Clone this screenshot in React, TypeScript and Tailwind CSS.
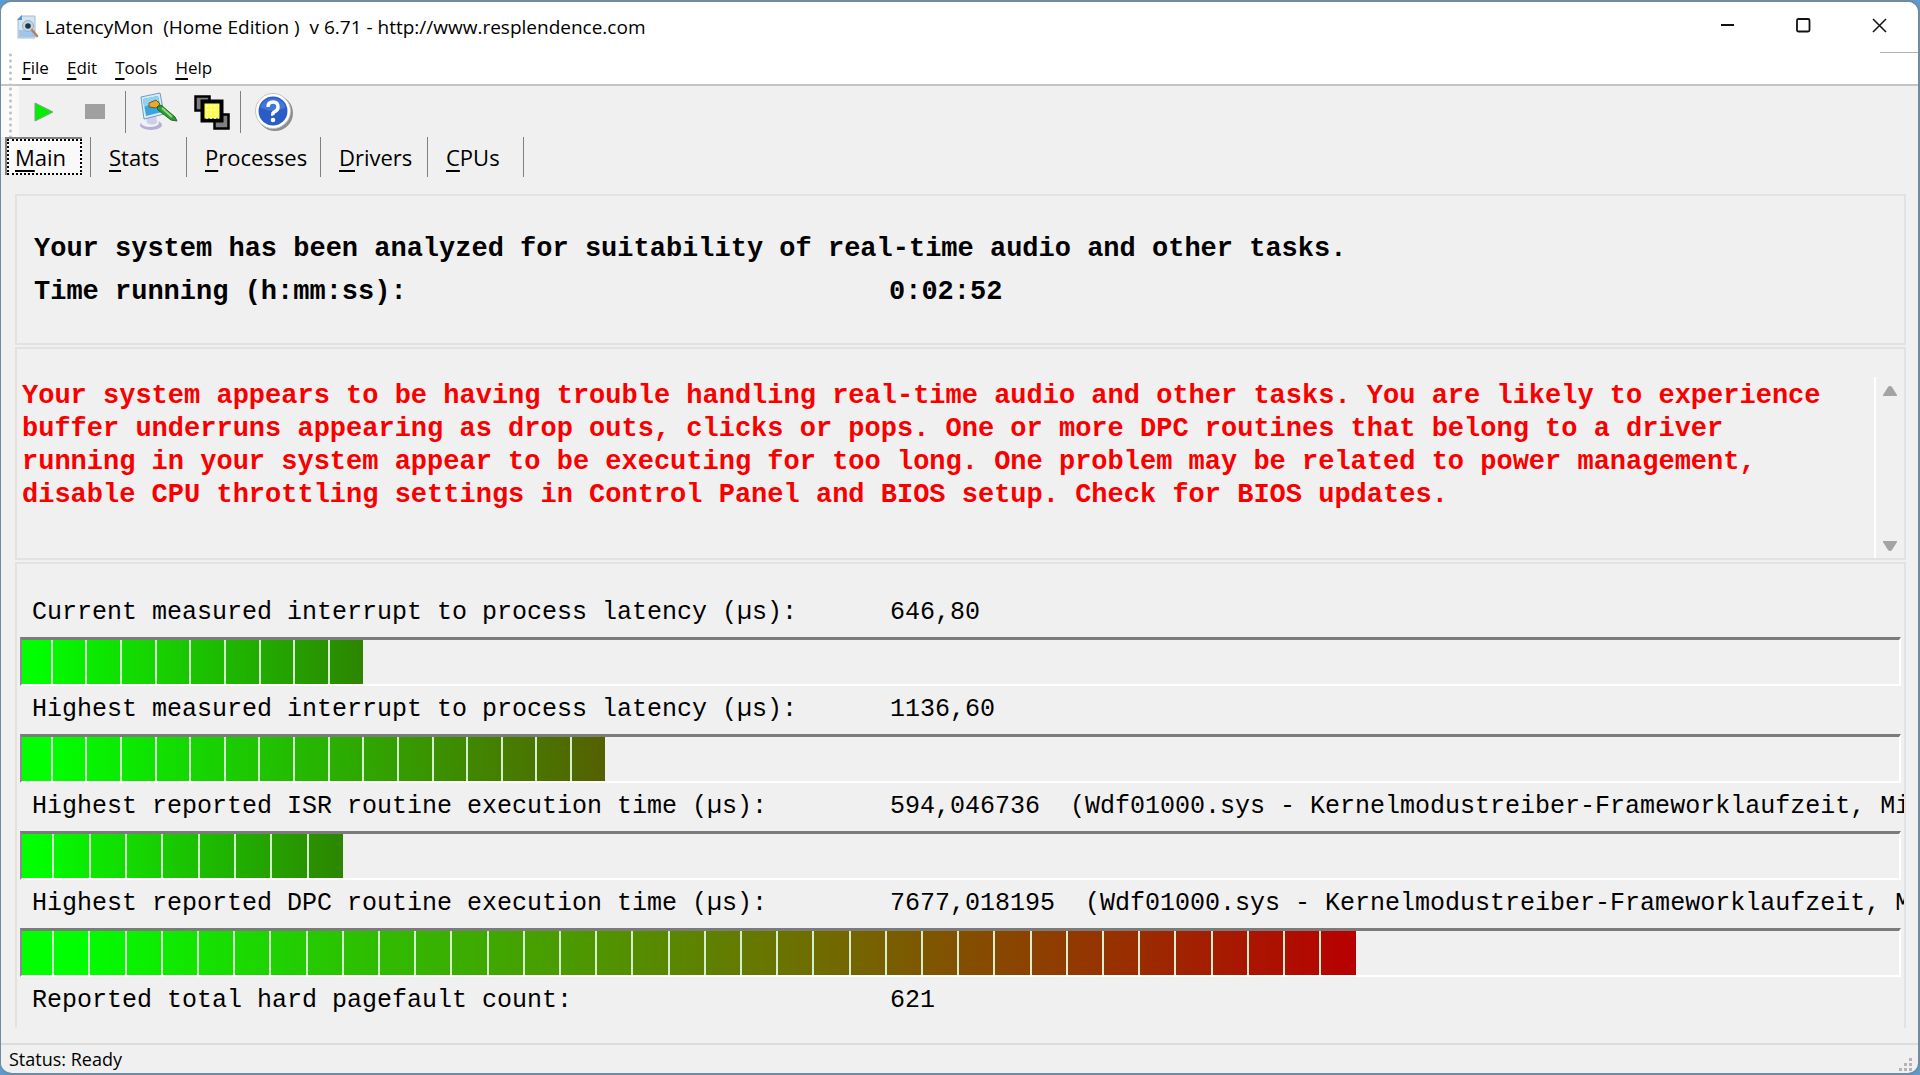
import { useState } from "react";

const TABS = [
  { name: "Main", width: "w-[86px]" },
  { name: "Stats", width: "w-24" },
  { name: "Processes", width: "w-[134px]" },
  { name: "Drivers", width: "w-[107px]" },
  { name: "CPUs", width: "w-24" },
];
const MENUS = ["File", "Edit", "Tools", "Help"];

const DRIVER = "(Wdf01000.sys - Kernelmodustreiber-Frameworklaufzeit, Microsoft Corporation)";

// fill = share of the track in percent, cells = number of blocks in the fill
const METERS = [
  {
    label: "Current measured interrupt to process latency (µs):",
    value: "646,80",
    fill: 18.15,
    cells: 10,
    gradient: "bg-[linear-gradient(90deg,#00ff00_4%,#14d800_35%,#2d8500)]",
  },
  {
    label: "Highest measured interrupt to process latency (µs):",
    value: "1136,60",
    fill: 31.05,
    cells: 17,
    gradient: "bg-[linear-gradient(90deg,#00ff00_5%,#2ea800_58%,#556000)]",
  },
  {
    label: "Highest reported ISR routine execution time (µs):",
    value: "594,046736  " + DRIVER,
    fill: 17.1,
    cells: 9,
    gradient: "bg-[linear-gradient(90deg,#00ff00_4%,#14d800_35%,#2d8500)]",
  },
  {
    label: "Highest reported DPC routine execution time (µs):",
    value: "7677,018195  " + DRIVER,
    fill: 71.05,
    cells: 37,
    gradient: "bg-[linear-gradient(90deg,#00ff00_4%,#2cc000_25%,#6e6e00_59%,#b80000)]",
  },
];

function Mnemonic({ text }: { text: string }) {
  return (
    <>
      <span className="underline decoration-2 underline-offset-4">{text[0]}</span>
      {text.slice(1)}
    </>
  );
}

function AppIcon() {
  return (
    <svg className="h-6 w-[22px]" viewBox="0 0 22 24" aria-hidden="true">
      <path d="M1 4 4 1h14v22H1z" fill="#d3e5f5" stroke="#a3bbd2" />
      <path d="M0 5 5 0v5z" fill="#5596d2" />
      <path d="M2 15h16v7H2z" fill="#9fc6ea" />
      <circle cx="11" cy="11" r="5.500" fill="#c4d6e0" stroke="#9aaebb" />
      <circle cx="11" cy="11" r="2.800" fill="#143844" />
      <path d="m15 15 5 6" stroke="#b9805f" strokeWidth="2.500" strokeLinecap="round" />
    </svg>
  );
}

function OptionsIcon() {
  return (
    <svg className="h-10 w-10" viewBox="0 0 40 40" aria-hidden="true">
      <ellipse cx="13" cy="33" rx="11" ry="5" fill="#b3b0d4" />
      <ellipse cx="12" cy="31" rx="9" ry="4" fill="#f0effa" />
      <path d="m8 24 10-1 1 8q-5 3-10 0z" fill="#cfcee8" />
      <path d="M3 5 22 1l4 21-20 5z" fill="#dcecf6" stroke="#6f9cb8" />
      <path d="M5 7 20 4l4 16-16 4z" fill="#38a3e8" />
      <path d="m5 7 15-3 1 5-15 6z" fill="#8fd2f6" />
      <path d="m11 11 7-3 4 4-4 4-7-1z" fill="#e8a92c" stroke="#7d5a12" />
      <path d="m19 15 4-2 14 12 2 4-6-1-13-10z" fill="#2f9a35" stroke="#1d6b25" />
      <path d="m24 16 10 9" stroke="#8fdc7a" strokeWidth="2" />
    </svg>
  );
}

function LayersIcon() {
  return (
    <svg className="h-9 w-9" viewBox="0 0 36 36" aria-hidden="true">
      <path d="M1.500 2.500h14v14h-14zM20.500 20.500h14v14h-14z" fill="#808080" stroke="#000" strokeWidth="2.500" />
      <path d="M8.500 7.500h19v19h-19z" fill="#ffff40" stroke="#000" strokeWidth="4" />
      <path d="M12 12h13M12 16h13M12 20h13M12 24h13" stroke="#fff" strokeWidth="1.500" strokeDasharray="2 2" />
    </svg>
  );
}

function HelpIcon() {
  return (
    <svg className="h-10 w-10" viewBox="0 0 40 40" aria-hidden="true">
      <circle cx="20" cy="21" r="18" fill="#8d8d8d" />
      <circle cx="18" cy="19" r="17.500" fill="#fff" stroke="#c4c4c4" />
      <circle cx="18" cy="19" r="14.500" fill="#2a5cc8" />
      <path d="M5 15a14 14 0 0 1 26 0q-13 8-26 0" fill="#4275d8" />
      <path d="M13 15q0-5 5-5t5 5q0 3-3 4.500t-2 4" fill="none" stroke="#fff" strokeWidth="3.500" />
      <circle cx="18" cy="28" r="2.300" fill="#fff" />
    </svg>
  );
}

function Gripper() {
  return (
    <div className="w-[3px] self-stretch bg-[radial-gradient(circle,#c2c2c2_1px,transparent_2px)] bg-size-[3px_6px]" />
  );
}

function Meter({ fill, cells, gradient }: { fill: number; cells: number; gradient: string }) {
  return (
    <div className="mx-[3px] h-[49px] border-t-3 border-r-2 border-b-2 border-l-2 border-t-[#7b7b7b] border-r-white border-b-white border-l-[#8c8c8c]">
      <div className={`flex h-full ${gradient}`} style={{ width: `${fill}%` }}>
        {Array.from({ length: cells }, (_, i) => (
          <div
            key={i}
            className="basis-0 border-r-2 border-[#d4efcf] last:border-r-0"
            style={{ flexGrow: i === 0 ? 0.88 : 1 }}
          />
        ))}
      </div>
    </div>
  );
}

export default function App() {
  const [tab, setTab] = useState("Main");

  return (
    <div className="h-screen bg-[#5b9bd0]">
      <div className="flex h-full flex-col overflow-hidden rounded-xl border-t-2 border-r-2 border-b-2 border-l border-[#6f8ba3] bg-[#f0f0f0] font-['Open_Sans',sans-serif] text-black">
        <header className="flex h-[50px] shrink-0 items-center justify-between bg-white pl-4">
          <div className="flex items-center gap-1.5">
            <AppIcon />
            <h1 className="text-[19px] whitespace-pre">
              {"LatencyMon  (Home Edition )  v 6.71 - http://www.resplendence.com"}
            </h1>
          </div>
          <div className="flex h-12 self-start">
            <button aria-label="Minimize" className="flex w-19 items-center justify-center">
              <svg className="size-4" viewBox="0 0 16 16"><path d="M1 7h13" stroke="#111" strokeWidth="2" /></svg>
            </button>
            <button aria-label="Maximize" className="flex w-19 items-center justify-center">
              <svg className="size-4" viewBox="0 0 16 16"><rect x="1" y="1" width="12.500" height="12.500" rx="1.500" fill="none" stroke="#111" strokeWidth="1.800" /></svg>
            </button>
            <button aria-label="Close" className="flex w-19 items-center justify-center">
              <svg className="size-4" viewBox="0 0 16 16"><path d="m1 1 13 13M14 1 1 14" stroke="#111" strokeWidth="1.500" /></svg>
            </button>
          </div>
        </header>

        <nav className="flex h-[34px] shrink-0 items-center border-b-2 border-[#c4c4c4] bg-white pl-2">
          <Gripper />
          <div className="ml-2.5 flex gap-[18px] text-[17px]">
            {MENUS.map((menu) => (
              <button key={menu}><Mnemonic text={menu} /></button>
            ))}
          </div>
          <div className="ml-auto h-px w-[38px] self-start bg-[#b5b5b5]" />
        </nav>

        <div className="flex h-[51px] shrink-0 items-center">
          <div className="flex h-full w-[18px] bg-[#fafafa] pl-2"><Gripper /></div>
          <button aria-label="Start" className="ml-3.5">
            <svg className="h-5 w-6" viewBox="0 0 24 20"><path d="M2 1v18l18-9z" fill="#00f000" stroke="#8a9a8a" /></svg>
          </button>
          <button aria-label="Stop" className="ml-7">
            <svg className="h-5 w-5" viewBox="0 0 20 20"><path d="M0 2h20v15H0z" fill="#a0a0a0" /></svg>
          </button>
          <div className="ml-5 h-[42px] w-px bg-[#808080]" />
          <button aria-label="Options" className="ml-3"><OptionsIcon /></button>
          <button aria-label="Windows" className="ml-4"><LayersIcon /></button>
          <div className="ml-2.5 h-[42px] w-px bg-[#808080]" />
          <button aria-label="Help" className="ml-3.5"><HelpIcon /></button>
        </div>

        <div role="tablist" className="flex h-10 shrink-0 pl-1 text-[22px]">
          {TABS.map(({ name, width }) => (
            <div key={name} className={`flex items-center border-r border-[#808080] ${width}`}>
              <button
                role="tab"
                aria-selected={tab === name}
                onClick={() => setTab(name)}
                className={
                  tab === name
                    ? "mr-2 h-[38px] flex-1 self-start border-t-2 border-l-2 border-[#808080] bg-[#f9f9f9]"
                    : "flex-1 pl-[18px] text-left"
                }
              >
                {tab === name ? (
                  <span className="flex h-full items-center border-2 border-dotted border-black pl-1.5">
                    <span><Mnemonic text={name} /></span>
                  </span>
                ) : (
                  <Mnemonic text={name} />
                )}
              </button>
            </div>
          ))}
        </div>

        <main className="mt-[17px] mr-3 ml-3.5 flex min-h-0 flex-1 flex-col gap-0.5 font-['Liberation_Mono',monospace]">
          <section className="h-[151px] shrink-0 border-2 border-[#e2e2e2] px-[17px] pt-8 text-[27px] leading-[43px] font-bold">
            <p>Your system has been analyzed for suitability of real-time audio and other tasks.</p>
            <div className="flex">
              <p className="w-[855px]">Time running (h:mm:ss):</p>
              <p>0:02:52</p>
            </div>
          </section>

          <section className="flex h-[213px] shrink-0 border-2 border-[#e2e2e2] pt-7">
            <p className="flex-1 pt-[3px] pr-10 pl-[5px] text-[27px] leading-[33px] font-bold text-[#f80000]">
              Your system appears to be having trouble handling real-time audio and other tasks. You are likely to
              experience buffer underruns appearing as drop outs, clicks or pops. One or more DPC routines that belong
              to a driver running in your system appear to be executing for too long. One problem may be related to
              power management, disable CPU throttling settings in Control Panel and BIOS setup. Check for BIOS updates.
            </p>
            <div className="flex w-[30px] flex-col items-center justify-between border-l-2 border-white pt-2 pb-1.5">
              <button aria-label="Scroll up">
                <svg className="h-3 w-3.5" viewBox="0 0 14 12"><path d="M5 2q2-2 4 0l5 8v1H0v-1z" fill="#a3a3a3" /></svg>
              </button>
              <button aria-label="Scroll down">
                <svg className="h-3 w-3.5" viewBox="0 0 14 12"><path d="M5 10q2 2 4 0l5-8V1H0v1z" fill="#a3a3a3" /></svg>
              </button>
            </div>
          </section>

          <section className="h-[466px] shrink-0 overflow-hidden border-2 border-b-0 border-[#e2e2e2] pt-[25px] text-[25px]">
            {METERS.map((m) => (
              <div key={m.label}>
                <div className="flex h-12 items-center overflow-hidden pl-[15px] whitespace-pre">
                  <span className="w-[858px] shrink-0">{m.label}</span>
                  <span>{m.value}</span>
                </div>
                <Meter fill={m.fill} cells={m.cells} gradient={m.gradient} />
              </div>
            ))}
            <div className="flex h-12 items-center pl-[15px]">
              <span className="w-[858px] shrink-0">Reported total hard pagefault count:</span>
              <span>621</span>
            </div>
          </section>
        </main>

        <footer className="flex h-[30px] shrink-0 items-center justify-between border-t-2 border-[#dcdcdc] pl-2 text-lg">
          <span>Status: Ready</span>
          <svg className="mr-1 size-4 self-end" viewBox="0 0 16 16" fill="#b4b4b4" aria-hidden="true">
            <path d="M11 1h3v3h-3zM6 6h3v3H6zM11 6h3v3h-3zM1 11h3v3H1zM6 11h3v3H6zM11 11h3v3h-3z" />
          </svg>
        </footer>
      </div>
    </div>
  );
}
